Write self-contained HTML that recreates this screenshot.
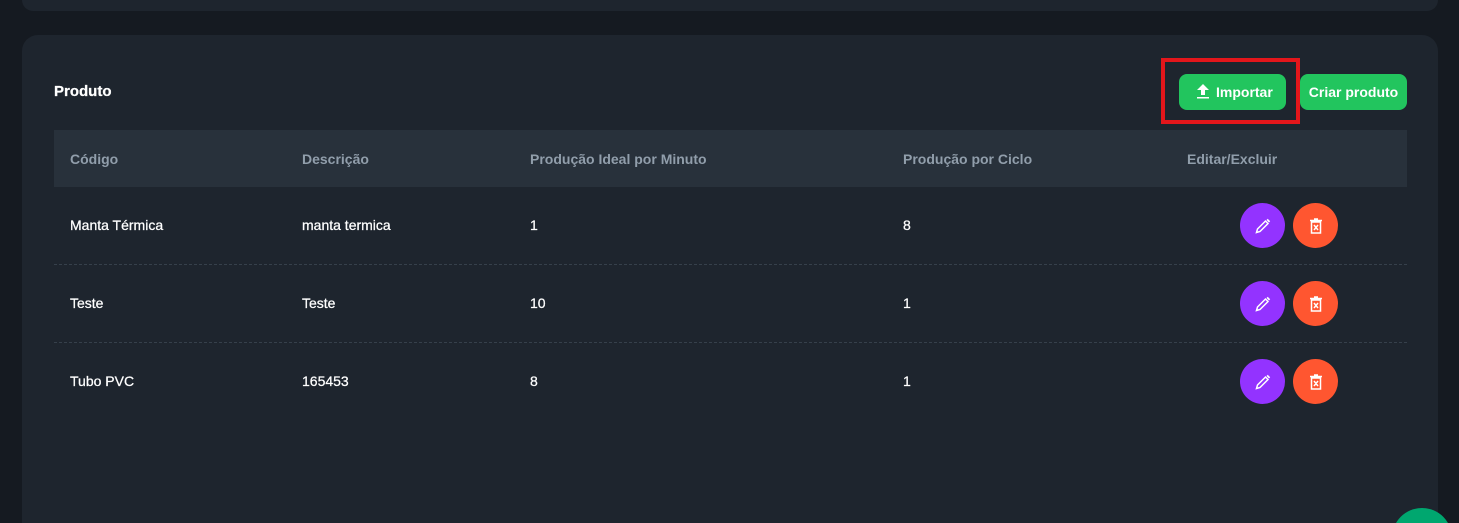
<!DOCTYPE html>
<html style="width:1459px;height:523px;overflow:hidden"><head><meta charset="utf-8"><style>
*{box-sizing:border-box;margin:0;padding:0}
body{width:1459px;height:523px;overflow:hidden;background:#151a21;font-family:"Liberation Sans",sans-serif;position:relative}
.card{position:absolute;left:22px;width:1416px;background:#1e252e;border-radius:16px}
.t{position:absolute;color:#fff;font-size:14px;-webkit-text-stroke:0.25px #fff}
.h{position:absolute;color:#919eab;font-size:14px;font-weight:bold;top:151px}
.btn{position:absolute;top:74px;height:36px;background:#22c55e;border-radius:8px;color:#fff;font-weight:bold;font-size:14px;line-height:36px}
.c{position:absolute;width:45px;height:45px;border-radius:50%;display:flex;align-items:center;justify-content:center}
.dash{position:absolute;left:54px;width:1353px;border-top:1px dashed #36404b}
</style></head><body>
<div class="card" style="top:0;height:11px;border-radius:0 0 16px 16px"></div>
<div class="card" style="top:35px;height:488px;border-radius:16px 16px 0 0"></div>
<div class="t" style="left:54px;top:83px;font-size:15px;font-weight:bold">Produto</div>
<div style="position:absolute;left:1161px;top:58px;width:139px;height:66px;border:4px solid #e3161b"></div>
<div class="btn" style="left:1179px;width:107px">
<svg width="16" height="16" viewBox="0 0 16 16" style="position:absolute;left:16px;top:9px"><path d="M8 1L2 7h4v5h4V7h4z M2 14h12v1.5H2z" fill="#fff"/></svg><span style="position:absolute;left:37px">Importar</span></div>
<div class="btn" style="left:1300px;width:107px;text-align:center">Criar produto</div>
<div style="position:absolute;left:54px;top:130px;width:1353px;height:57px;background:#28313b"></div>
<div class="h" style="left:70px">Código</div>
<div class="h" style="left:302px">Descrição</div>
<div class="h" style="left:530px">Produção Ideal por Minuto</div>
<div class="h" style="left:903px">Produção por Ciclo</div>
<div class="h" style="left:1187px">Editar/Excluir</div>
<div class="dash" style="top:264px"></div>
<div class="dash" style="top:342px"></div>
<div class="t" style="left:70px;top:217px">Manta Térmica</div><div class="t" style="left:302px;top:217px">manta termica</div><div class="t" style="left:530px;top:217px">1</div><div class="t" style="left:903px;top:217px">8</div>
<div class="t" style="left:70px;top:295px">Teste</div><div class="t" style="left:302px;top:295px">Teste</div><div class="t" style="left:530px;top:295px">10</div><div class="t" style="left:903px;top:295px">1</div>
<div class="t" style="left:70px;top:373px">Tubo PVC</div><div class="t" style="left:302px;top:373px">165453</div><div class="t" style="left:530px;top:373px">8</div><div class="t" style="left:903px;top:373px">1</div>
<div class="c" style="left:1240px;top:203px;background:#9333ff"><svg width="16" height="16" viewBox="0 0 16 16"><path d="M1.5 14.5l1-3.5 8-8 2.5 2.5-8 8z" fill="none" stroke="#fff" stroke-width="1.5"/><path d="M11.5 2l1.2-1.2 2.5 2.5L14 4.5z" fill="#fff"/></svg></div>
<div class="c" style="left:1293px;top:203px;background:#ff5630"><svg width="14" height="16" viewBox="0 0 14 16"><path d="M1 2.5h12M5 1h4M2.5 4h9v11h-9z M5 7l4 5M9 7l-4 5" fill="none" stroke="#fff" stroke-width="1.5"/></svg></div>
<div class="c" style="left:1240px;top:281px;background:#9333ff"><svg width="16" height="16" viewBox="0 0 16 16"><path d="M1.5 14.5l1-3.5 8-8 2.5 2.5-8 8z" fill="none" stroke="#fff" stroke-width="1.5"/><path d="M11.5 2l1.2-1.2 2.5 2.5L14 4.5z" fill="#fff"/></svg></div>
<div class="c" style="left:1293px;top:281px;background:#ff5630"><svg width="14" height="16" viewBox="0 0 14 16"><path d="M1 2.5h12M5 1h4M2.5 4h9v11h-9z M5 7l4 5M9 7l-4 5" fill="none" stroke="#fff" stroke-width="1.5"/></svg></div>
<div class="c" style="left:1240px;top:359px;background:#9333ff"><svg width="16" height="16" viewBox="0 0 16 16"><path d="M1.5 14.5l1-3.5 8-8 2.5 2.5-8 8z" fill="none" stroke="#fff" stroke-width="1.5"/><path d="M11.5 2l1.2-1.2 2.5 2.5L14 4.5z" fill="#fff"/></svg></div>
<div class="c" style="left:1293px;top:359px;background:#ff5630"><svg width="14" height="16" viewBox="0 0 14 16"><path d="M1 2.5h12M5 1h4M2.5 4h9v11h-9z M5 7l4 5M9 7l-4 5" fill="none" stroke="#fff" stroke-width="1.5"/></svg></div>
<div style="position:absolute;left:1382px;top:498px;width:77px;height:25px;overflow:hidden"><div style="position:absolute;left:10px;top:10px;width:60px;height:60px;border-radius:50%;background:#00a76f"></div></div>
</body></html>
